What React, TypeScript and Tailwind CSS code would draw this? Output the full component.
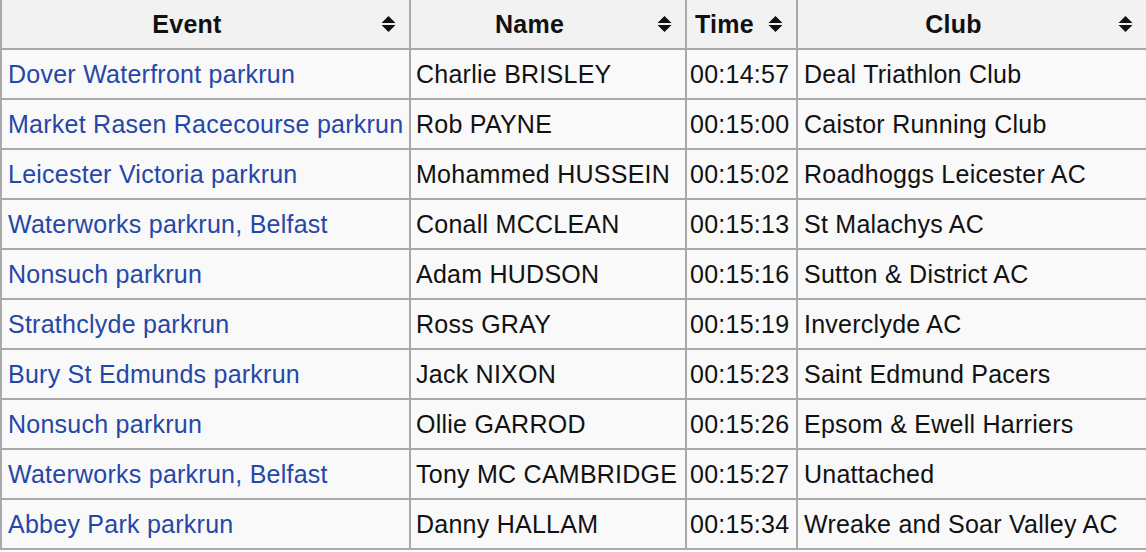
import React from "react";

type Row = {
  event: string;
  name: string;
  time: string;
  club: string;
};

const rows: Row[] = [
  { event: "Dover Waterfront parkrun", name: "Charlie BRISLEY", time: "00:14:57", club: "Deal Triathlon Club" },
  { event: "Market Rasen Racecourse parkrun", name: "Rob PAYNE", time: "00:15:00", club: "Caistor Running Club" },
  { event: "Leicester Victoria parkrun", name: "Mohammed HUSSEIN", time: "00:15:02", club: "Roadhoggs Leicester AC" },
  { event: "Waterworks parkrun, Belfast", name: "Conall MCCLEAN", time: "00:15:13", club: "St Malachys AC" },
  { event: "Nonsuch parkrun", name: "Adam HUDSON", time: "00:15:16", club: "Sutton & District AC" },
  { event: "Strathclyde parkrun", name: "Ross GRAY", time: "00:15:19", club: "Inverclyde AC" },
  { event: "Bury St Edmunds parkrun", name: "Jack NIXON", time: "00:15:23", club: "Saint Edmund Pacers" },
  { event: "Nonsuch parkrun", name: "Ollie GARROD", time: "00:15:26", club: "Epsom & Ewell Harriers" },
  { event: "Waterworks parkrun, Belfast", name: "Tony MC CAMBRIDGE", time: "00:15:27", club: "Unattached" },
  { event: "Abbey Park parkrun", name: "Danny HALLAM", time: "00:15:34", club: "Wreake and Soar Valley AC" },
];

// up/down sort arrows, like the wiki sortable header
const SortIcon = () => (
  <svg
    width="15"
    height="17"
    viewBox="0 0 15 17"
    className="absolute right-[13px] top-1/2 -translate-y-1/2"
  >
    <path d="M7.5 0.5 L14.5 7.5 L0.5 7.5 Z" fill="#111" />
    <path d="M0.5 9.5 L14.5 9.5 L7.5 16.5 Z" fill="#111" />
  </svg>
);

const headers = [
  { label: "Event", w: "w-[411px]", first: true },
  { label: "Name", w: "w-[276px]", first: false },
  { label: "Time", w: "w-[111px]", first: false },
  { label: "Club", w: "w-[350px]", first: false },
];

export default function App() {
  return (
    <div className="w-[1146px] h-[552px] overflow-hidden bg-white font-['Liberation_Sans',Arial,sans-serif] text-[25px] tracking-[0.25px] text-[#111]">
      <table className="table-fixed border-separate border-spacing-0 w-[1148px]">
        <thead>
          <tr>
            {headers.map((h) => (
              <th
                key={h.label}
                className={`${h.w} ${h.first ? "border-l-2" : ""} relative h-[50px] border-r-2 border-b-2 border-[#a9a9a9] bg-[#f2f2f2] pl-[8px] pr-[45px] pt-[1px] text-center align-middle font-bold`}
              >
                {h.label}
                <SortIcon />
              </th>
            ))}
          </tr>
        </thead>
        <tbody>
          {rows.map((r, i) => (
            <tr key={i}>
              <td className="h-[50px] border-l-2 border-r-2 border-b-2 border-[#a9a9a9] bg-[#f9f9f9] px-[6px] pt-[2px] align-middle whitespace-nowrap">
                <a href="#" className="text-[#2447a8]">
                  {r.event}
                </a>
              </td>
              <td className="h-[50px] border-r-2 border-b-2 border-[#a9a9a9] bg-[#f9f9f9] px-[5px] pt-[2px] align-middle whitespace-nowrap">
                {r.name}
              </td>
              <td className="h-[50px] border-r-2 border-b-2 border-[#a9a9a9] bg-[#f9f9f9] px-[3px] pt-[2px] align-middle whitespace-nowrap">
                {r.time}
              </td>
              <td className="h-[50px] border-r-2 border-b-2 border-[#a9a9a9] bg-[#f9f9f9] px-[6px] pt-[2px] align-middle whitespace-nowrap">
                {r.club}
              </td>
            </tr>
          ))}
        </tbody>
      </table>
    </div>
  );
}
